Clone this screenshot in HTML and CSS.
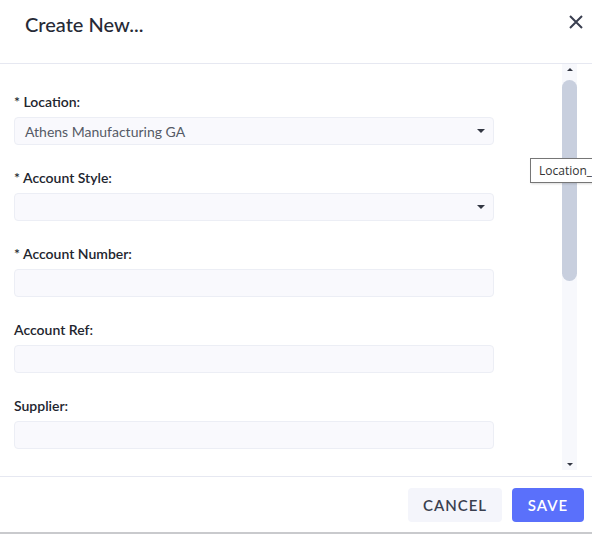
FILE: index.html
```html
<!DOCTYPE html>
<html>
<head>
<meta charset="utf-8">
<link rel="stylesheet" href="styles.css">
</head>
<body>
<div class="dialog">
  <div class="header">
    <h1 class="title">Create New...</h1>
    <svg class="close" width="14" height="14" viewBox="0 0 14 14"><path d="M1 1L13 13M13 1L1 13" stroke="#3a3f50" stroke-width="2" fill="none"/></svg>
  </div>
  <div class="body">
    <div class="form">
      <div class="field">
        <label class="label">* Location:</label>
        <div class="input select"><span class="value">Athens Manufacturing GA</span><span class="caret"></span></div>
      </div>
      <div class="field">
        <label class="label">* Account Style:</label>
        <div class="input select"><span class="value"></span><span class="caret"></span></div>
      </div>
      <div class="field">
        <label class="label">* Account Number:</label>
        <div class="input"></div>
      </div>
      <div class="field">
        <label class="label">Account Ref:</label>
        <div class="input"></div>
      </div>
      <div class="field">
        <label class="label">Supplier:</label>
        <div class="input"></div>
      </div>
    </div>
    <div class="scrollbar">
      <span class="arrow up"></span>
      <div class="track"><div class="thumb"></div></div>
      <span class="arrow down"></span>
    </div>
  </div>
  <div class="footer">
    <button class="btn cancel">CANCEL</button>
    <button class="btn save">SAVE</button>
  </div>
  <div class="tooltip">Location_ID</div>
</div>
</body>
</html>
```
FILE: styles.css
```css
html, body {
  margin: 0;
  padding: 0;
  background: #ffffff;
  overflow: hidden;
}
.dialog {
  position: relative;
  width: 592px;
  height: 532px;
  border-bottom: 2px solid #c9cacd;
  display: flex;
  flex-direction: column;
  font-family: Lato, "Open Sans", sans-serif;
  color: #2b2f3b;
}
.header {
  height: 63px;
  border-bottom: 1px solid #e6e8f1;
  display: flex;
  align-items: center;
  justify-content: space-between;
  padding: 0 9px 0 25px;
  box-sizing: content-box;
}
.title {
  margin: 0 0 16px 0;
  font-size: 20px;
  font-weight: 500;
  color: #262a36;
}
.close {
  margin-bottom: 19px;
}
.body {
  height: 412px;
  display: flex;
  border-bottom: 1px solid #e6e8f1;
}
.form {
  flex: 1;
  padding: 29px 0 0 14px;
  overflow: hidden;
}
.field {
  display: flex;
  flex-direction: column;
  gap: 6px;
  margin-bottom: 24px;
}
.label {
  font-size: 14px;
  line-height: 18px;
  font-weight: 600;
  color: #22252e;
}
.input {
  height: 26px;
  background: #f9f9fd;
  border: 1px solid #eceef5;
  border-radius: 4px;
  display: flex;
  align-items: center;
  justify-content: space-between;
  padding: 0 8px 0 10px;
  box-sizing: content-box;
  width: 460px;
}
.value {
  font-size: 14px;
  color: #555a66;
}
.caret {
  width: 0;
  height: 0;
  border-left: 4px solid transparent;
  border-right: 4px solid transparent;
  border-top: 4px solid #333743;
}
.scrollbar {
  width: 15px;
  margin: 0 15px 6px 0;
  background: #f7f8fc;
  display: flex;
  flex-direction: column;
  align-items: center;
}
.arrow {
  width: 0;
  height: 0;
  border-left: 3px solid transparent;
  border-right: 3px solid transparent;
}
.arrow.up {
  border-bottom: 3px solid #333743;
  margin-top: 4px;
}
.arrow.down {
  border-top: 3px solid #333743;
  margin-bottom: 4px;
}
.track {
  flex: 1;
  width: 15px;
  padding-top: 9px;
}
.thumb {
  height: 201px;
  background: #c8cfde;
  border-radius: 8px;
}
.footer {
  flex: 1;
  display: flex;
  justify-content: flex-end;
  align-items: center;
  gap: 10px;
  padding-right: 8px;
}
.btn {
  height: 34px;
  border: none;
  border-radius: 4px;
  font-family: Lato, "Open Sans", sans-serif;
  font-size: 15px;
  font-weight: 600;
  letter-spacing: 1px;
  padding: 0;
}
.cancel {
  width: 94px;
  background: #f4f5fb;
  color: #3a3f4f;
}
.save {
  width: 72px;
  background: #5a70fb;
  color: #ffffff;
}
.tooltip {
  position: absolute;
  left: 530px;
  top: 158px;
  height: 23px;
  padding: 0 8px;
  border: 1px solid #767676;
  background: #ffffff;
  font-family: "Segoe UI", "Open Sans", sans-serif;
  font-size: 12px;
  line-height: 23px;
  color: #333;
  white-space: nowrap;
  box-shadow: 1px 1px 2px rgba(0,0,0,0.15);
}
```
